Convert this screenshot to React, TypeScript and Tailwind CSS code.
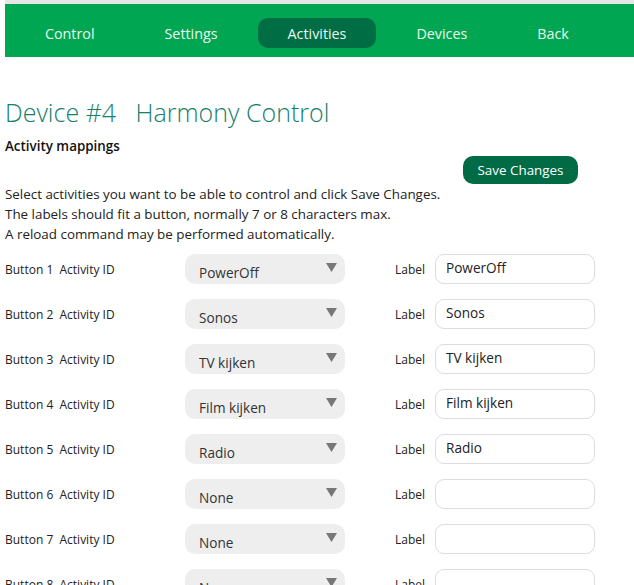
const navItems = ["Control", "Settings", "Activities", "Devices", "Back"];

const rows = [
  "PowerOff",
  "Sonos",
  "TV kijken",
  "Film kijken",
  "Radio",
  "None",
  "None",
  "None",
];

const labels = ["PowerOff", "Sonos", "TV kijken", "Film kijken", "Radio", "", "", ""];

function Caret() {
  return (
    <svg width="11" height="9" viewBox="0 0 11 9" className="absolute right-[8px] top-[9px]">
      <path d="M0 0 H11 L5.5 9 Z" fill="#777777" />
    </svg>
  );
}

function Row({ n, activity, label }: { n: number; activity: string; label: string }) {
  return (
    <div className="flex items-center h-[30px]">
      <div className="w-[180px] pt-[2px] text-[12px] text-[#222]">
        Button {n}&nbsp; Activity ID
      </div>
      <div className="relative w-[160px] h-[30px] rounded-[10px] bg-[#eeeeee] pl-[14px] pt-[9px] text-[13.6px] leading-[20px] text-[#333]">
        {activity}
        <Caret />
      </div>
      <div className="w-[50px]" />
      <div className="w-[40px] pt-[2px] text-[12px] text-[#222]">Label</div>
      <div className="w-[160px] h-[30px] rounded-[9px] border border-[#dddddd] bg-white pl-[10px] pt-[3px] text-[13.6px] leading-[20px] text-[#222]">
        {label}
      </div>
    </div>
  );
}

export default function App() {
  return (
    <div className="min-h-screen bg-white font-['Open_Sans',sans-serif]">
      <div className="pl-[5px]">
        <div className="h-[4px] bg-[#e6e6e6]" />
        <nav className="flex h-[53px] bg-[#00a651] pl-[10px] pt-[14px] gap-[10px]">
          {navItems.map((item) => (
            <div
              key={item}
              className={
                item === "Activities"
                  ? "h-[30px] px-[30px] rounded-[10px] bg-[#006d45] text-[14.3px] leading-[32px] text-[#eaf7f0]"
                  : "h-[30px] px-[30px] rounded-[10px] text-[14.3px] leading-[32px] text-[#eaf7f0]"
              }
            >
              {item}
            </div>
          ))}
        </nav>
      </div>

      <div className="pl-[5px]">
        <h1 className="mt-[37px] text-[25px] leading-[36px] font-light text-[#16806a]">
          Device #4&nbsp;&nbsp; Harmony Control
        </h1>
        <div className="mt-[6px] text-[13.4px] leading-[20px] font-semibold text-[#111]">
          Activity mappings
        </div>
        <div className="flex justify-end pr-[56px]">
          <button className="h-[28px] w-[115px] rounded-[10px] bg-[#006b45] text-[13.4px] text-white">
            Save Changes
          </button>
        </div>
        <div className="text-[13.4px] leading-[20px] text-[#222]">
          <p>Select activities you want to be able to control and click Save Changes.</p>
          <p>The labels should fit a button, normally 7 or 8 characters max.</p>
          <p>A reload command may be performed automatically.</p>
        </div>
        <div className="mt-[10px] flex flex-col gap-[15px] pb-[20px]">
          {rows.map((a, i) => (
            <Row key={i} n={i + 1} activity={a} label={labels[i]} />
          ))}
        </div>
      </div>
    </div>
  );
}
